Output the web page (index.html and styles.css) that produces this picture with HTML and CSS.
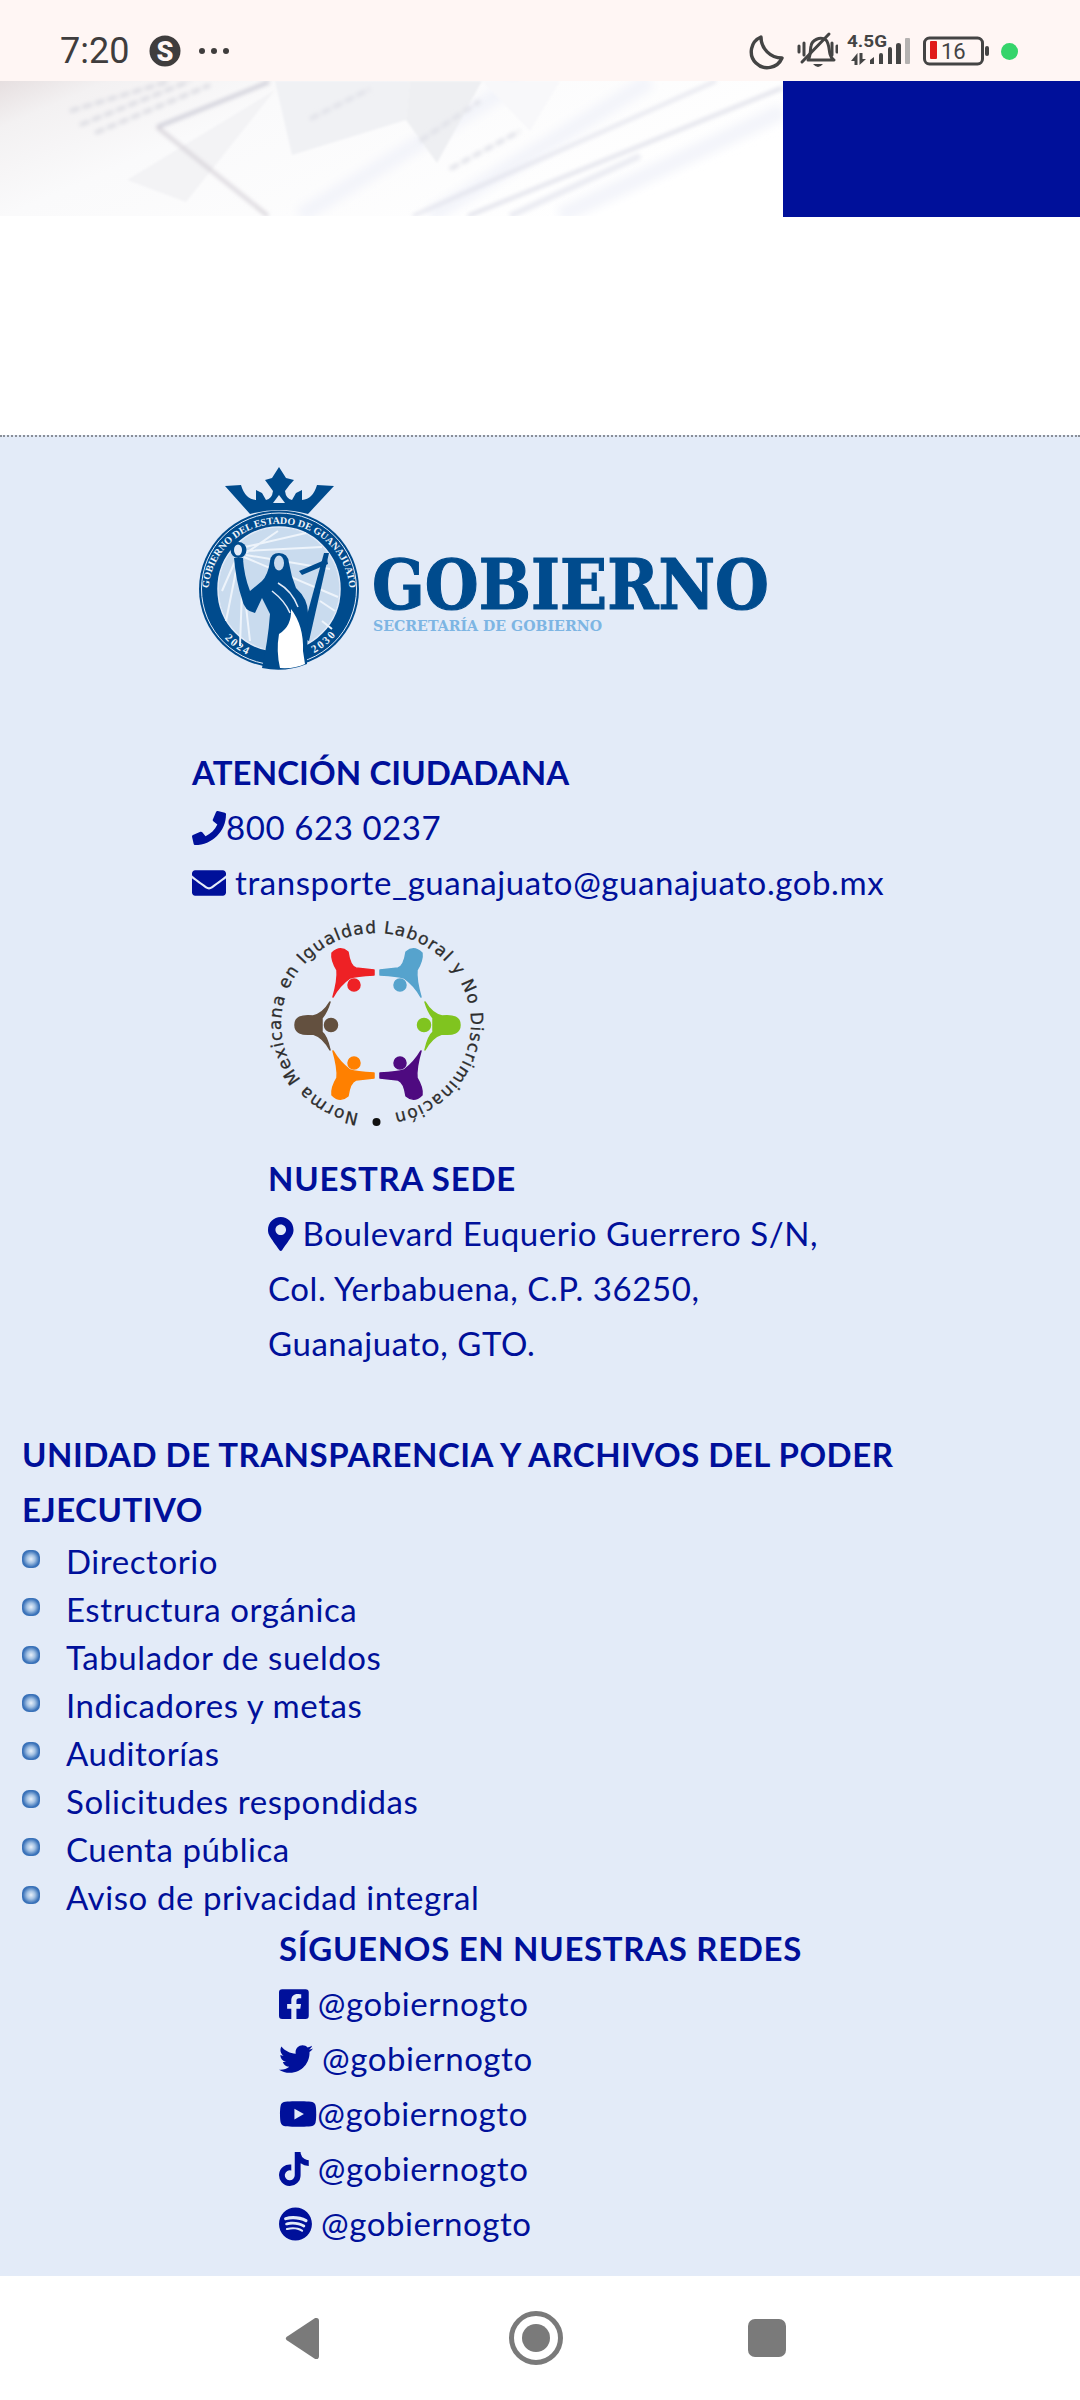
FILE: index.html

```html
<!DOCTYPE html>
<html lang="es">
<head>
    <meta charset="UTF-8">
    <title>Gobierno de Guanajuato - Transporte</title>
    <link rel="stylesheet" href="styles.css">
</head>
<body>

<!-- status bar -->
<div class="status">
    <span class="time">7:20</span>
    <svg class="st-s" viewBox="0 0 32 32"><circle cx="16" cy="16" r="15.5" fill="#3f3d3d"/><text class="st-s-letter" x="16" y="25.500" text-anchor="middle">S</text></svg>
    <svg class="st-dots" viewBox="0 0 32 8"><circle cx="4" cy="4" r="3" fill="#3f3d3d"/><circle cx="16" cy="4" r="3" fill="#3f3d3d"/><circle cx="28" cy="4" r="3" fill="#3f3d3d"/></svg>
    <div class="status-right">
        <svg class="st-moon" viewBox="749 30 35 42"><path d="M761 37A16 16 0 1 0 782 58A21 21 0 0 1 761 37Z" fill="none" stroke="#444" stroke-width="3.4" stroke-linejoin="round"/></svg>
        <svg class="st-bell" viewBox="797 30 41 42">
            <g fill="none" stroke="#444" stroke-width="3" stroke-linecap="round" stroke-linejoin="round">
                <path d="M808 60C811 56 810 50 811 46C812 40 820 36 826 40C829 43 829 50 830 54C831 57 832 59 834 60Z"/>
                <path d="M802 62L829 34"/>
                <path d="M799 46V52M804 43V55M832 43V55M837 46V52"/>
            </g>
            <path d="M813 64H823Q818 70 813 64Z" fill="#444"/>
        </svg>
        <svg class="st-signal" viewBox="847 30 65 42">
            <text class="st-net" x="847" y="47" textLength="40" lengthAdjust="spacingAndGlyphs">4.5G</text>
            <path d="M857.500 53V65H854.500V61H851ZM859.500 53H862.500V59H866L859.500 65Z" fill="#444"/>
            <path d="M870 60L874 57V64H870ZM879 55Q879 53 881 53Q883 53 883 55V64H879ZM888 49Q888 47 890 47Q892 47 892 49V64H888ZM896 45Q896 43 898.500 43Q901 43 901 45V64H896Z" fill="#444"/>
            <rect x="905" y="38" width="5" height="26" rx="1" fill="#b5b2b1"/>
        </svg>
        <svg class="st-batt" viewBox="923 30 67 42">
            <rect x="924.500" y="38" width="58" height="26" rx="5" fill="none" stroke="#444" stroke-width="3"/>
            <rect x="930" y="41" width="7" height="18" rx="1" fill="#e01a1a"/>
            <text class="st-level" x="941" y="59">16</text>
            <rect x="985" y="46" width="4" height="10" rx="2" fill="#444"/>
        </svg>
        <span class="st-dot"></span>
    </div>
</div>

<!-- banner -->
<div class="hero">
    <svg class="hero-pic" viewBox="0 0 783 135" preserveAspectRatio="none">
        <defs>
            <linearGradient id="heroBg" x1="0" y1="0" x2="1" y2="0.4">
                <stop offset="0" stop-color="#e6dfe0"/>
                <stop offset="0.12" stop-color="#f3f1f2"/>
                <stop offset="0.35" stop-color="#fafafb"/>
                <stop offset="1" stop-color="#fff"/>
            </linearGradient>
            <filter id="soft"><feGaussianBlur stdDeviation="2"/></filter>
            <filter id="softer"><feGaussianBlur stdDeviation="5"/></filter>
            <filter id="faint"><feGaussianBlur stdDeviation="1"/></filter>
        </defs>
        <rect width="783" height="135" fill="url(#heroBg)"/>
        <g filter="url(#softer)" fill="none" stroke="#f3f4fa" stroke-width="16">
            <path d="M300 135L520 0M430 135L650 0M560 135L783 30"/>
        </g>
        <g filter="url(#faint)">
            <polygon points="275,0 292,74 406,39 410,0" fill="#f0f1f4"/>
            <polygon points="410,0 406,39 437,82 482,0" fill="#eeeff2"/>
            <polygon points="127,99 186,121 275,9" fill="#f3f3f5"/>
            <polygon points="482,0 530,50 560,0" fill="#f8f8fa"/>
        </g>
        <g filter="url(#soft)" fill="none" stroke="#c6c6d2" stroke-width="3">
            <path d="M269 1L157 46"/>
            <path d="M157 46L268 135" stroke="#d3cfd6"/>
            <path d="M413 135L716 0" stroke="#dfe0ea"/>
            <path d="M468 135L782 7" stroke="#dadbe6"/>
            <path d="M510 135L640 75" stroke="#eaebf2" stroke-width="6"/>
        </g>
        <g filter="url(#soft)" fill="none" stroke="#dcdce2" stroke-width="4" stroke-dasharray="10 3">
            <path d="M70 30L170 0M80 44L190 0M95 52L210 4"/>
            <path d="M310 38L370 8M420 60L480 20M450 88L520 50" stroke="#e0e1e8"/>
        </g>
    </svg>
    <div class="hero-block"></div>
</div>

<div class="gap"></div>

<footer class="foot">

    <!-- logo -->
    <svg class="logo" viewBox="190 436 600 308">
        <defs>
            <path id="sealArc" d="M210 606A70.500 69 0 1 1 348 606"/>
            <path id="yearL" d="M216 626A74 73 0 0 0 262 659"/>
            <path id="yearR" d="M300 658A74 73 0 0 0 345 620"/>
        </defs>
        <path d="M250 513L225 485L241 484Q245 498 256 499L256 489L262 492L266 499Q272 498 273 490Q268 483 265 479L272 477L279 466L286 477L294 479Q290 483 285 490Q286 498 292 499L296 492L302 489L302 499Q313 498 317 484L334 485L308 513Q279 505 250 513Z" fill="#004b8d"/>
        <path d="M279 494L285 502H273Z" fill="#e3ebf8"/>
        <ellipse cx="279" cy="588" rx="80" ry="78.500" fill="#004b8d"/>
        <ellipse cx="279" cy="588" rx="77.500" ry="76" fill="none" stroke="#e3ebf8" stroke-width="1"/>
        <ellipse cx="279" cy="588" rx="61" ry="62" fill="#c9dbee" stroke="#e3ebf8" stroke-width="1.500"/>
        <g stroke="#eef4fb" stroke-width="2">
            <path d="M245 546L306 532M245 550L322 546M246 554L330 568M244 556L338 596M236 558L222 590M238 560L226 620M241 562L250 640M243 560L240 645M246 552L278 530M320 600L335 610M322 620L332 628"/>
        </g>
        <text class="seal-txt" font-size="10"><textPath href="#sealArc" startOffset="50%" text-anchor="middle">GOBIERNO DEL ESTADO DE GUANAJUATO</textPath></text>
        <text class="seal-txt" font-size="11" letter-spacing="2"><textPath href="#yearL" startOffset="50%" text-anchor="middle">2024</textPath></text>
        <text class="seal-txt" font-size="11" letter-spacing="2"><textPath href="#yearR" startOffset="50%" text-anchor="middle">2030</textPath></text>
        <!-- cross -->
        <path d="M324 552L329 552L309 640L301 636Z" fill="#004b8d"/>
        <path d="M299 570L327 558L328 563L302 574Z" fill="#004b8d"/>
        <!-- lady -->
        <circle cx="238.500" cy="549" r="8" fill="#004b8d"/>
        <path d="M270 560Q271 552 279 552Q288 552 289 562Q291 575 296 587Q308 598 308 612L307 663Q285 672 262 667Q268 640 270 613L262 597L255 612Q244 610 242 598Q236 580 234 557L243 557Q244 575 250 590L262 580Q268 574 270 560Z" fill="#004b8d"/>
        <path d="M291 608Q304 625 303 650L305 663Q295 668 280 667Q276 650 279 633Q292 625 291 608Z" fill="#fff"/>
        <ellipse cx="279" cy="562" rx="5" ry="7.500" fill="#c9dbee"/>
        <path d="M272 590Q285 600 290 612M278 582Q292 590 298 606" fill="none" stroke="#e3ebf8" stroke-width="1.500"/>
        <ellipse cx="238" cy="549" rx="4" ry="5.500" fill="#e3ebf8"/>
        <text class="logo-title" x="372" y="608" textLength="397" lengthAdjust="spacingAndGlyphs">GOBIERNO</text>
        <text class="logo-sub" x="373" y="629.500" textLength="229" lengthAdjust="spacingAndGlyphs">SECRETARÍA DE GOBIERNO</text>
    </svg>

    <div class="contact">
        <h4>ATENCIÓN CIUDADANA</h4>
        <p><svg class="ic" viewBox="0 0 512 512"><path d="M493.400 24.600l-104-24c-11.300-2.600-22.900 3.300-27.500 13.900l-48 112c-4.200 9.800-1.400 21.300 6.900 28l60.600 49.600c-36 76.700-98.900 140.500-177.200 177.200l-49.600-60.600c-6.800-8.300-18.200-11.100-28-6.900l-112 48C3.900 366.500-2 378.100.6 389.400l24 104C27.100 504.200 36.700 512 48 512c256.100 0 464-207.500 464-464 0-11.200-7.700-20.900-18.600-23.400z"/></svg>800 623 0237</p>
        <p><svg class="ic" viewBox="0 0 512 512"><path d="M502.300 190.800c3.900-3.100 9.700-.2 9.700 4.700V400c0 26.500-21.500 48-48 48H48c-26.500 0-48-21.500-48-48V195.600c0-5 5.700-7.800 9.700-4.700 22.400 17.400 52.100 39.500 154.100 113.600 21.100 15.400 56.700 47.800 92.200 47.600 35.700.3 72-32.800 92.300-47.600 102-74.100 131.600-96.300 154-113.700zM256 320c23.200.4 56.600-29.200 73.400-41.400 132.700-96.300 142.800-104.700 173.400-128.700 5.800-4.500 9.200-11.500 9.200-18.900v-19c0-26.500-21.500-48-48-48H48C21.500 64 0 85.500 0 112v19c0 7.400 3.400 14.300 9.200 18.900 30.600 23.900 40.700 32.400 173.400 128.700 16.800 12.200 50.200 41.800 73.400 41.400z"/></svg> transporte_guanajuato@guanajuato.gob.mx</p>
    </div>

    <!-- sello norma -->
    <svg class="norma" viewBox="260 910 240 241">
        <defs>
            <path id="normaRing" d="M376 1115A95 91 0 1 1 376 933A95 91 0 1 1 376 1115"/>
            <g id="figA">
                <path d="M332 953Q340 945 348 952Q350 966 356 968L374 970L374 975Q356 976 350 978Q340 985 333 997Q338 980 337 970Q331 960 332 953Z"/>
                <circle cx="354" cy="985" r="6"/>
            </g>
            <g id="figB">
                <path d="M425 1002Q432 1014 442 1016Q460 1014 460 1025Q460 1036 442 1034Q432 1037 425 1050Q428 1036 433 1032L433 1018Q428 1012 425 1002Z"/>
                <circle cx="424" cy="1025" r="6.500"/>
            </g>
        </defs>
        <text class="norma-txt"><textPath href="#normaRing" startOffset="17" textLength="548" lengthAdjust="spacing">Norma Mexicana en Igualdad Laboral y No Discriminación</textPath></text>
        <circle cx="376.500" cy="1122" r="4" fill="#111"/>
        <use class="fig" href="#figA" fill="#ee2125" stroke="#ee2125"/>
        <use class="fig" href="#figA" fill="#56a3cd" stroke="#56a3cd" transform="translate(754 0) scale(-1 1)"/>
        <use class="fig" href="#figA" fill="#ff8000" stroke="#ff8000" transform="translate(0 2048) scale(1 -1)"/>
        <use class="fig" href="#figA" fill="#4e0a80" stroke="#4e0a80" transform="translate(754 2048) scale(-1 -1)"/>
        <use class="fig" href="#figB" fill="#80c41f" stroke="#80c41f"/>
        <use class="fig" href="#figB" fill="#63503f" stroke="#63503f" transform="translate(755 0) scale(-1 1)"/>
    </svg>

    <div class="sede">
        <h4>NUESTRA SEDE</h4>
        <p><svg class="ic" viewBox="0 0 384 512"><path d="M172.268 501.670C26.970 291.031 0 268.413 0 192 0 85.961 85.961 0 192 0s192 85.961 192 192c0 76.413-26.970 99.031-172.268 309.670-9.535 13.774-29.930 13.773-39.464 0zM192 272c44.183 0 80-35.817 80-80s-35.817-80-80-80-80 35.817-80 80 35.817 80 80 80z"/></svg> Boulevard Euquerio Guerrero S/N,</p>
        <p>Col. Yerbabuena, C.P. 36250,</p>
        <p>Guanajuato, GTO.</p>
    </div>

    <div class="unidad">
        <h4>UNIDAD DE TRANSPARENCIA Y ARCHIVOS DEL PODER EJECUTIVO</h4>
        <ul>
            <li>Directorio</li>
            <li>Estructura orgánica</li>
            <li>Tabulador de sueldos</li>
            <li>Indicadores y metas</li>
            <li>Auditorías</li>
            <li>Solicitudes respondidas</li>
            <li>Cuenta pública</li>
            <li>Aviso de privacidad integral</li>
        </ul>
    </div>

    <div class="redes">
        <h4>SÍGUENOS EN NUESTRAS REDES</h4>
        <p><svg class="ic" viewBox="0 0 448 512"><path d="M400 32H48A48 48 0 0 0 0 80v352a48 48 0 0 0 48 48h137.250V327.690h-63V256h63v-54.640c0-62.150 37-96.480 93.670-96.480 27.140 0 55.520 4.840 55.520 4.840v61h-31.270c-30.810 0-40.420 19.120-40.420 38.730V256h68.780l-11 71.690h-57.780V480H400a48 48 0 0 0 48-48V80a48 48 0 0 0-48-48z"/></svg> @gobiernogto</p>
        <p><svg class="ic" viewBox="0 0 512 512"><path d="M459.370 151.716c.325 4.548.325 9.097.325 13.645 0 138.720-105.583 298.558-298.558 298.558-59.452 0-114.680-17.219-161.137-47.106 8.447.974 16.568 1.299 25.340 1.299 49.055 0 94.213-16.568 130.274-44.832-46.132-.975-84.792-31.188-98.112-72.772 6.498.974 12.995 1.624 19.818 1.624 9.421 0 18.843-1.300 27.614-3.573-48.081-9.747-84.143-51.980-84.143-102.985v-1.299c13.969 7.797 30.214 12.670 47.431 13.319-28.264-18.843-46.781-51.005-46.781-87.391 0-19.492 5.197-37.360 14.294-52.954 51.655 63.675 129.300 105.258 216.365 109.807-1.624-7.797-2.599-15.918-2.599-24.040 0-57.828 46.782-104.934 104.934-104.934 30.213 0 57.502 12.670 76.670 33.137 23.715-4.548 46.456-13.645 66.599-25.340-7.798 24.366-24.366 44.833-46.132 57.827 21.117-2.273 41.584-8.122 60.426-16.243-14.292 20.791-32.161 39.308-52.628 54.253z"/></svg> @gobiernogto</p>
        <p><svg class="ic" viewBox="0 0 576 512"><path d="M549.655 124.083c-6.281-23.650-24.787-42.276-48.284-48.597C458.781 64 288 64 288 64S117.220 64 74.629 75.486c-23.497 6.322-42.003 24.947-48.284 48.597-11.412 42.867-11.412 132.305-11.412 132.305s0 89.438 11.412 132.305c6.281 23.650 24.787 41.500 48.284 47.821C117.220 448 288 448 288 448s170.780 0 213.371-11.486c23.497-6.321 42.003-24.171 48.284-47.821 11.412-42.867 11.412-132.305 11.412-132.305s0-89.438-11.412-132.305zm-317.510 213.508V175.185l142.739 81.205-142.739 81.201z"/></svg>@gobiernogto</p>
        <p><svg class="ic" viewBox="0 0 448 512"><path d="M448 209.910a210.060 210.060 0 0 1-122.770-39.250V349.380A162.550 162.550 0 1 1 185 188.310V278.200a74.620 74.620 0 1 0 52.230 71.180V0l88 0a121.180 121.180 0 0 0 1.860 22.170h0A122.180 122.180 0 0 0 381 102.390a121.430 121.430 0 0 0 67 20.140Z"/></svg> @gobiernogto</p>
        <p><svg class="ic" viewBox="0 0 496 512"><path d="M248 8C111.100 8 0 119.100 0 256s111.100 248 248 248 248-111.100 248-248S384.900 8 248 8zm100.700 364.900c-4.200 0-6.800-1.300-10.700-3.600-62.400-37.600-135-39.200-206.700-24.500-3.900 1-9 2.600-11.900 2.600-9.700 0-15.800-7.700-15.800-15.800 0-10.300 6.100-15.200 13.600-16.800 81.900-18.100 165.600-16.500 237 26.200 6.100 3.900 9.700 7.400 9.700 16.500s-7.100 15.400-15.200 15.400zm26.900-65.600c-5.200 0-8.700-2.300-12.300-4.200-62.500-37-155.700-51.900-238.600-29.400-4.800 1.300-7.400 2.600-11.900 2.600-10.700 0-19.400-8.700-19.400-19.400s5.200-17.800 15.500-20.700c27.800-7.800 56.200-13.600 97.800-13.600 64.900 0 127.600 16.100 177 45.500 8.100 4.800 11.300 11 11.300 19.700-.1 10.800-8.500 19.500-19.400 19.500zm31-76.200c-5.200 0-8.400-1.300-12.900-3.900-71.200-42.500-198.500-52.700-280.900-29.700-3.600 1-8.100 2.600-12.900 2.600-13.200 0-23.300-10.300-23.300-23.600 0-13.600 8.400-21.300 17.400-23.900 35.200-10.300 74.600-15.200 117.500-15.200 73 0 149.500 15.200 205.400 47.800 7.800 4.500 12.900 10.700 12.900 22.600 0 13.600-11 23.300-23.200 23.300z"/></svg> @gobiernogto</p>
    </div>
</footer>

<!-- android nav -->
<div class="nav">
    <svg class="nav-back" viewBox="0 0 36 44"><path d="M1.500 20.500L31 1Q35 0 35 4V40Q35 44 31 43L1.500 23.500Q0 22 1.500 20.500Z" fill="#7a7a7a"/></svg>
    <svg class="nav-home" viewBox="0 0 56 56"><circle cx="28" cy="28" r="24.500" fill="none" stroke="#7a7a7a" stroke-width="5"/><circle cx="28" cy="28" r="14" fill="#7a7a7a"/></svg>
    <div class="nav-square"></div>
</div>

</body>
</html>
```

FILE: styles.css

```css
* {
    box-sizing: border-box;
}
html, body {
    margin: 0;
    padding: 0;
}
body {
    width: 1080px;
    height: 2400px;
    overflow: hidden;
    background-color: #fff;
    font-family: Lato, "Open Sans", sans-serif;
    color: #00109a;
}
h4, p, ul {
    margin: 0;
    padding: 0;
}

/* status bar */
.status {
    height: 81px;
    padding: 21px 62px 0 60px;
    background-color: #fff6f4;
    display: flex;
    align-items: center;
}
.time {
    font-family: Roboto, sans-serif;
    font-size: 36px;
    color: #3f3d3d;
    width: 89px;
}
.st-s {
    width: 32px;
    height: 32px;
}
.st-s-letter {
    font-family: Roboto, sans-serif;
    font-weight: 900;
    font-size: 27px;
    fill: #fff6f4;
}
.st-dots {
    width: 32px;
    height: 8px;
    margin-left: 17px;
}
.status-right {
    margin-left: auto;
    display: flex;
    align-items: center;
}
.st-moon {
    width: 35px;
    height: 42px;
}
.st-bell {
    width: 41px;
    height: 42px;
    margin-left: 13px;
}
.st-signal {
    width: 65px;
    height: 42px;
    margin-left: 9px;
}
.st-net {
    font-family: Roboto, sans-serif;
    font-weight: 700;
    font-size: 17px;
    fill: #444;
}
.st-batt {
    width: 67px;
    height: 42px;
    margin-left: 11px;
}
.st-level {
    font-family: Roboto, sans-serif;
    font-size: 22px;
    fill: #444;
}
.st-dot {
    width: 17px;
    height: 17px;
    margin-left: 11px;
    border-radius: 50%;
    background-color: #35d46b;
}

/* banner */
.hero {
    display: flex;
    height: 136px;
}
.hero-pic {
    width: 783px;
    height: 135px;
    display: block;
}
.hero-block {
    flex: 1;
    background-color: #00109a;
}
.gap {
    height: 218px;
}

/* footer */
.foot {
    height: 1841px;
    border-top: 2px dotted #8a8f98;
    background-color: #e3ebf8;
    font-size: 33px;
    line-height: 55px;
    letter-spacing: 0.58px;
}
.foot h4 {
    font-weight: 700;
    font-size: 33px;
    letter-spacing: 0.5px;
}
.ic {
    height: 34px;
    vertical-align: -5px;
    fill: #00109a;
}
.logo {
    display: block;
    width: 600px;
    height: 308px;
    margin-left: 190px;
    letter-spacing: 0;
}
.logo-title {
    font-family: "DejaVu Serif", serif;
    font-weight: 700;
    font-size: 70px;
    fill: #004b8d;
    stroke: #004b8d;
    stroke-width: 1.200;
}
.logo-sub {
    font-family: "DejaVu Serif", serif;
    font-weight: 700;
    font-size: 14.500px;
    fill: #7db5e3;
}
.seal-txt {
    font-family: "Liberation Serif", serif;
    font-weight: 700;
    fill: #eef4fb;
}
.contact {
    margin-left: 192px;
}
.contact h4 {
    letter-spacing: 0.1px;
}
.norma {
    display: block;
    width: 240px;
    height: 241px;
    margin-left: 260px;
    letter-spacing: 0;
}
.norma-txt {
    font-family: "DejaVu Sans", sans-serif;
    font-size: 17px;
    fill: #2d2d2d;
    stroke: #2d2d2d;
    stroke-width: 0.300;
}
.fig {
    stroke-width: 1.500;
    stroke-linejoin: round;
}
.sede {
    margin-left: 268px;
}
.sede h4 {
    letter-spacing: 0.75px;
}
.unidad {
    margin: 56px 0 0 22px;
    width: 920px;
}
.unidad ul {
    list-style: none;
    line-height: 48px;
}
.unidad li {
    display: flex;
    align-items: flex-start;
    gap: 26px;
}
.unidad li::before {
    content: "";
    width: 18px;
    height: 18px;
    margin-top: 13px;
    border-radius: 7px;
    background: radial-gradient(circle closest-side, #e8f0fa 0, #a3c1e3 45%, #3a72b9 90%);
}
.redes {
    margin-left: 279px;
}
.redes h4 {
    letter-spacing: 0.68px;
}

/* android nav */
.nav {
    height: 124px;
    display: flex;
    align-items: center;
}
.nav-back {
    width: 35px;
    height: 43px;
    margin-left: 285px;
}
.nav-home {
    width: 56px;
    height: 56px;
    margin-left: 188px;
}
.nav-square {
    width: 38px;
    height: 38px;
    margin-left: 184px;
    border-radius: 7px;
    background-color: #7a7a7a;
}
```
